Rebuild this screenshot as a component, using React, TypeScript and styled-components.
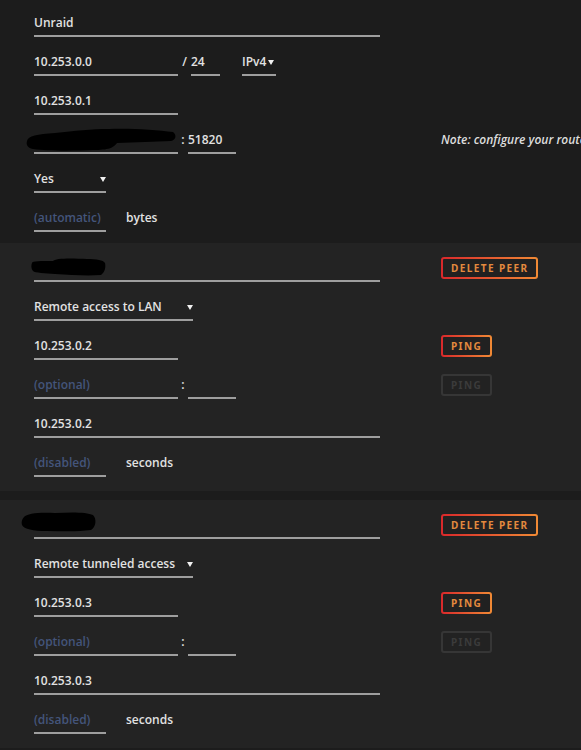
import styled, { createGlobalStyle } from "styled-components";
import { ReactNode } from "react";

const GlobalStyle = createGlobalStyle`
  html, body {
    margin: 0;
    padding: 0;
    background: #1c1c1c;
  }
  body {
    font-family: "Open Sans", "Noto Sans", sans-serif;
    overflow: hidden;
  }
`;

const Page = styled.div`
  width: 581px;
  height: 750px;
  overflow: hidden;
  background: #1c1c1c;
`;

const TopSection = styled.div`
  padding-bottom: 9px;
`;

const PeerSection = styled.div`
  background: #232323;
  padding: 2px 0 12px;
  margin-bottom: 9px;
`;

const Row = styled.div`
  display: flex;
  align-items: flex-end;
  height: 39px;
  padding-bottom: 2px;
  box-sizing: border-box;
`;

const LeftCell = styled.div`
  width: 441px;
  flex: none;
  padding-left: 34px;
  box-sizing: border-box;
  display: flex;
  align-items: flex-end;
`;

const RightCell = styled.div`
  display: flex;
  align-items: flex-end;
  white-space: nowrap;
`;

const Field = styled.div<{ $width: number; $muted?: boolean }>`
  position: relative;
  width: ${({ $width }) => $width}px;
  flex: none;
  display: flex;
  align-items: center;
  justify-content: space-between;
  line-height: 18px;
  height: 18px;
  padding-bottom: 3px;
  border-bottom: 2px solid #9e9e9e;
  font-size: 12px;
  font-weight: 600;
  color: ${({ $muted }) => ($muted ? "#44557b" : "#e2e2e2")};
  white-space: nowrap;
`;

const Joiner = styled.span<{ $gap: number }>`
  font-size: 12px;
  font-weight: 600;
  color: #e2e2e2;
  line-height: 18px;
  padding-bottom: 5px;
  width: ${({ $gap }) => $gap}px;
  flex: none;
  text-align: center;
`;

const Spacer = styled.span<{ $w: number }>`
  width: ${({ $w }) => $w}px;
  flex: none;
`;

const Unit = styled.span`
  margin-left: 20px;
  font-size: 12px;
  font-weight: 600;
  color: #e2e2e2;
  line-height: 18px;
  padding-bottom: 5px;
`;

const Note = styled.span`
  font-size: 12px;
  font-weight: 600;
  font-style: italic;
  color: #dcdcdc;
  line-height: 18px;
  padding-bottom: 5px;
`;

const Btn = styled.button<{ $disabled?: boolean }>`
  height: 22px;
  margin-bottom: 3px;
  padding: 0 8px;
  box-sizing: border-box;
  border-radius: 3px;
  border: 2px solid transparent;
  font-family: "Noto Sans", sans-serif;
  font-size: 10px;
  font-weight: 700;
  letter-spacing: 1.4px;
  line-height: 18px;
  cursor: pointer;
  color: ${({ $disabled }) => ($disabled ? "#3b3b3b" : "#e38a3e")};
  background: ${({ $disabled }) =>
    $disabled
      ? "linear-gradient(#222, #222) padding-box, linear-gradient(#363636, #363636) border-box"
      : "linear-gradient(#212121, #212121) padding-box, linear-gradient(90deg, #d9282b, #f08a35) border-box"};
`;

const Blot = styled.svg`
  position: absolute;
  pointer-events: none;
`;

const Caret = () => (
  <svg width="6" height="5" viewBox="0 0 6 5">
    <path d="M0 0 L6 0 L3 5 Z" fill="#f0f0f0" />
  </svg>
);

const SelectText = styled.span`
  display: flex;
  align-items: center;
  gap: 2px;
`;

type FieldRowProps = {
  left: ReactNode;
  right?: ReactNode;
};

const FieldRow = ({ left, right }: FieldRowProps) => (
  <Row>
    <LeftCell>{left}</LeftCell>
    {right && <RightCell>{right}</RightCell>}
  </Row>
);

type PeerProps = {
  type: string;
  address: string;
  blot: ReactNode;
};

const Peer = ({ type, address, blot }: PeerProps) => (
  <PeerSection>
    <FieldRow
      left={<Field $width={346}>{blot}&nbsp;</Field>}
      right={<Btn>DELETE PEER</Btn>}
    />
    <FieldRow
      left={
        <Field $width={159}>
          {type}
          <Caret />
        </Field>
      }
    />
    <FieldRow
      left={<Field $width={144}>{address}</Field>}
      right={<Btn>PING</Btn>}
    />
    <FieldRow
      left={
        <>
          <Field $width={144} $muted>
            (optional)
          </Field>
          <Joiner $gap={10}>:</Joiner>
          <Field $width={48} />
        </>
      }
      right={<Btn $disabled>PING</Btn>}
    />
    <FieldRow left={<Field $width={346}>{address}</Field>} />
    <FieldRow
      left={
        <>
          <Field $width={72} $muted>
            (disabled)
          </Field>
          <Unit>seconds</Unit>
        </>
      }
    />
  </PeerSection>
);

export default function App() {
  return (
    <Page>
      <GlobalStyle />
      <TopSection>
        <FieldRow left={<Field $width={346}>Unraid</Field>} />
        <FieldRow
          left={
            <>
              <Field $width={144}>10.253.0.0</Field>
              <Joiner $gap={13}>/</Joiner>
              <Field $width={29}>24</Field>
              <Spacer $w={22} />
              <Field $width={34}>
                <SelectText>
                  IPv4
                  <Caret />
                </SelectText>
              </Field>
            </>
          }
        />
        <FieldRow left={<Field $width={144}>10.253.0.1</Field>} />
        <FieldRow
          left={
            <>
              <Field $width={144}>
                <Blot
                  width="152"
                  height="24"
                  viewBox="0 0 152 24"
                  style={{ left: -9, top: -3 }}
                >
                  <path
                    d="M2 13 C3 8 12 6 30 5 C50 3 66 1 84 1 C104 0 132 2 148 4 C152 7 151 12 146 13 C130 14 110 14 92 15 C88 20 84 22 68 22 C48 23 22 23 8 21 C2 20 1 16 2 13 Z"
                    fill="#000"
                  />
                </Blot>
                &nbsp;
              </Field>
              <Joiner $gap={10}>:</Joiner>
              <Field $width={48}>51820</Field>
            </>
          }
          right={<Note>Note: configure your router with port forwarding of port UDP:51820</Note>}
        />
        <FieldRow
          left={
            <Field $width={72}>
              Yes
              <Caret />
            </Field>
          }
        />
        <FieldRow
          left={
            <>
              <Field $width={72} $muted>
                (automatic)
              </Field>
              <Unit>bytes</Unit>
            </>
          }
        />
      </TopSection>
      <Peer
        type="Remote access to LAN"
        address="10.253.0.2"
        blot={
          <Blot
            width="76"
            height="20"
            viewBox="0 0 76 20"
            style={{ left: -3, top: -2 }}
          >
            <path
              d="M1 6 C1 4 10 4 22 4 C24 1 40 1 56 2 C66 2 72 3 74 6 C75 10 74 15 70 18 C56 19 40 18 24 17 C14 16 4 16 2 14 C0 12 0 8 1 6 Z"
              fill="#000"
            />
          </Blot>
        }
      />
      <Peer
        type="Remote tunneled access"
        address="10.253.0.3"
        blot={
          <Blot
            width="76"
            height="22"
            viewBox="0 0 76 22"
            style={{ left: -13, top: -5 }}
          >
            <path
              d="M3 6 C6 2 20 1 34 2 C50 1 66 1 72 4 C76 8 75 16 70 19 C56 21 40 20 26 20 C12 20 3 18 1 14 C0 11 1 8 3 6 Z"
              fill="#000"
            />
          </Blot>
        }
      />
    </Page>
  );
}
